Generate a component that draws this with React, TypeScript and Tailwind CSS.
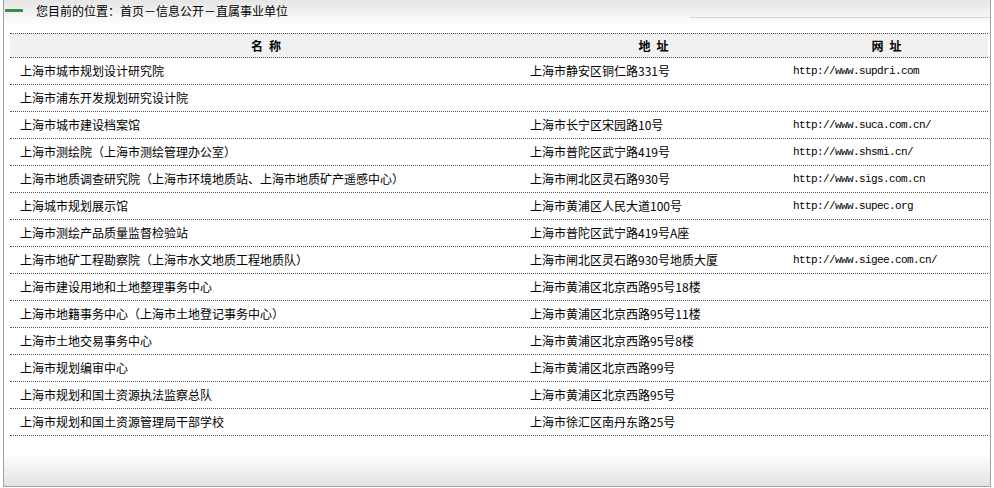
import React from "react";

const rows: [string, string, string][] = [
  ["上海市城市规划设计研究院", "上海市静安区铜仁路331号", "http://www.supdri.com"],
  ["上海市浦东开发规划研究设计院", "", ""],
  ["上海市城市建设档案馆", "上海市长宁区宋园路10号", "http://www.suca.com.cn/"],
  ["上海市测绘院（上海市测绘管理办公室）", "上海市普陀区武宁路419号", "http://www.shsmi.cn/"],
  ["上海市地质调查研究院（上海市环境地质站、上海市地质矿产遥感中心）", "上海市闸北区灵石路930号", "http://www.sigs.com.cn"],
  ["上海城市规划展示馆", "上海市黄浦区人民大道100号", "http://www.supec.org"],
  ["上海市测绘产品质量监督检验站", "上海市普陀区武宁路419号A座", ""],
  ["上海市地矿工程勘察院（上海市水文地质工程地质队）", "上海市闸北区灵石路930号地质大厦", "http://www.sigee.com.cn/"],
  ["上海市建设用地和土地整理事务中心", "上海市黄浦区北京西路95号18楼", ""],
  ["上海市地籍事务中心（上海市土地登记事务中心）", "上海市黄浦区北京西路95号11楼", ""],
  ["上海市土地交易事务中心", "上海市黄浦区北京西路95号8楼", ""],
  ["上海市规划编审中心", "上海市黄浦区北京西路99号", ""],
  ["上海市规划和国土资源执法监察总队", "上海市黄浦区北京西路95号", ""],
  ["上海市规划和国土资源管理局干部学校", "上海市徐汇区南丹东路25号", ""],
];

const cjk = { fontFamily: '"Noto Sans CJK SC", "Noto Sans", sans-serif' };
const mono = { fontFamily: '"Liberation Mono", "DejaVu Sans Mono", monospace' };

function Head({ a, b }: { a: string; b: string }) {
  return (
    <span className="inline-flex gap-[6px]">
      <span>{a}</span>
      <span>{b}</span>
    </span>
  );
}

export default function App() {
  return (
    <div className="w-[994px] h-[488px] bg-white text-black" style={cjk}>
      <div className="ml-[3px] w-[988px] h-[487px] flex flex-col border-l border-r border-b border-[#a3a3a3]">
        {/* header */}
        <div className="h-[25px] flex items-start bg-linear-to-b from-[#e5e5e5] to-white">
          <div className="mt-[9px] ml-[1px] w-[18px] h-[3px] bg-[#3c8c4e]" />
          <div className="ml-[13px] mt-[3px] text-[12px] leading-[16px]">
            您目前的位置：首页－信息公开－直属事业单位
          </div>
          <div className="ml-auto mt-[17px] w-[300px] h-px bg-[#d4d4d4]" />
        </div>
        {/* table */}
        <div className="pt-[8px] pl-[6px] pr-[2px]">
          <div className="flex h-[25px] items-center bg-[#f1f1f1] border-y border-dotted border-[#555] text-[12px] font-bold">
            <div className="w-[512px] text-center">
              <Head a="名" b="称" />
            </div>
            <div className="w-[263px] text-center">
              <Head a="地" b="址" />
            </div>
            <div className="flex-1 text-center">
              <Head a="网" b="址" />
            </div>
          </div>
          {rows.map((r, i) => (
            <div
              key={i}
              className="flex h-[27px] items-center border-b border-dotted border-[#555] text-[12px]"
            >
              <div className="w-[512px] pl-[10px] whitespace-nowrap">{r[0]}</div>
              <div className="w-[263px] pl-[8px] whitespace-nowrap">{r[1]}</div>
              <div className="flex-1 pl-[8px] whitespace-nowrap text-[11px] tracking-[-0.6px]" style={mono}>
                {r[2]}
              </div>
            </div>
          ))}
        </div>
        <div className="flex-1 bg-linear-to-b from-white from-35% to-[#e2e2e2]" />
      </div>
    </div>
  );
}
